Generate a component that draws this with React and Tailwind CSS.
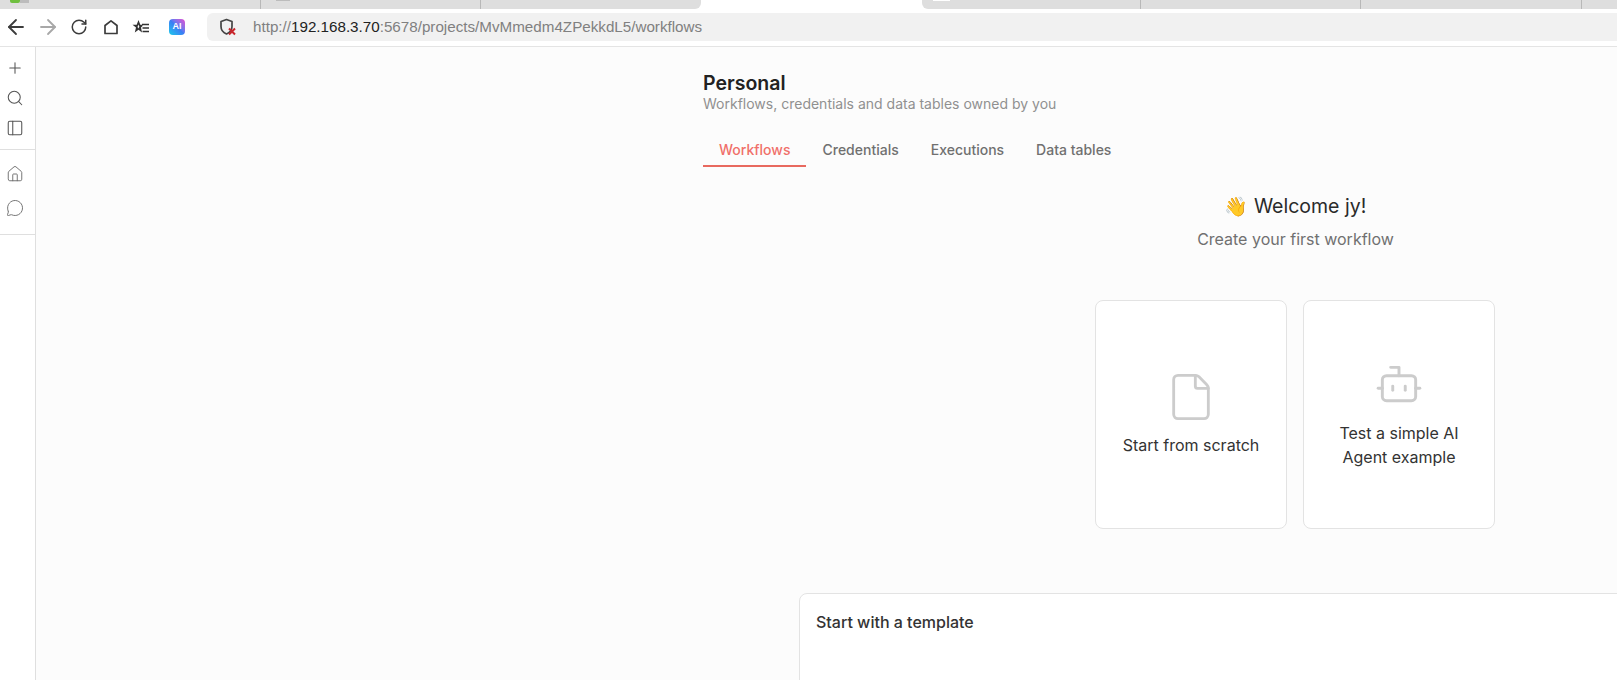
import React from 'react';
import { Plus, Search, PanelLeft, House, MessageCircle, File, Bot, ArrowLeft, ArrowRight, RotateCw } from 'lucide-react';

function TabStrip() {
  return (
    <div className="flex h-[9px] overflow-hidden bg-white">
      <div className="flex w-[261px] items-start border-r border-[#b8b8b8] bg-[#dedede] pl-[10px]">
        <div className="h-[3px] w-[10px] rounded-b-[2px] bg-[#6fbf3f]" />
        <div className="h-[3px] w-[9px] bg-[#bcbcbc]" />
      </div>
      <div className="w-[220px] border-r border-[#b8b8b8] bg-[#dedede] pl-[15px]">
        <div className="h-[1px] w-[14px] bg-[#bcbcbc]" />
      </div>
      <div className="w-[220px] rounded-br-[6px] bg-[#dedede]" />
      <div className="w-[221px] bg-white" />
      <div className="w-[219px] rounded-bl-[6px] border-r border-[#b8b8b8] bg-[#dedede] pl-[11px]">
        <div className="h-[1px] w-[17px] bg-white" />
      </div>
      <div className="w-[220px] border-r border-[#b8b8b8] bg-[#dedede]" />
      <div className="w-[221px] border-r border-[#b8b8b8] bg-[#dedede]" />
      <div className="flex-1 bg-[#dedede]" />
    </div>
  );
}

function Toolbar() {
  return (
    <div className="flex h-[38px] items-start border-b border-[#e4e4e4] bg-white">
      <div className="flex h-[36px] w-[207px] items-center text-[#3c3c3c]">
        <div className="flex w-[32px] justify-center">
          <ArrowLeft size={24} strokeWidth={1.8} />
        </div>
        <div className="flex w-[32px] justify-center text-[#a8a8a8]">
          <ArrowRight size={24} strokeWidth={1.8} />
        </div>
        <div className="flex w-[30px] justify-center">
          <RotateCw size={18} strokeWidth={2} />
        </div>
        <div className="flex w-[34px] justify-center">
          <svg width="16" height="16" viewBox="0 0 16 16" fill="none" stroke="currentColor" strokeWidth="1.7">
            <path d="M2 14.500V6.500L8 1.800l6 4.700v8z" strokeLinejoin="round" />
          </svg>
        </div>
        <div className="flex w-[24px] justify-center">
          <svg width="17" height="16" viewBox="0 0 17 16">
            <path d="M6.500 1l1.800 4.700h2.200v1.400L9 8.400l1 5.100-3.500-2.700L2.800 13.500l1.200-5.100L.5 5.700h4.200z" fill="#333333" />
            <path d="M6.500 5.500l.8 2-.8 2-1-1.500z" fill="#ffffff" />
            <path d="M10 5.500h7M10.500 9h6.500M10.500 12.500h6.500" stroke="#333333" strokeWidth="1.500" />
          </svg>
        </div>
        <div className="flex w-[50px] justify-center">
          <div className="flex h-4 w-4 items-center justify-center rounded-[4px] bg-gradient-to-tr from-[#18c8e8] via-[#3a7df5] to-[#e040d0] font-['Liberation_Sans',sans-serif] text-[9px] font-bold text-white">
            AI
          </div>
        </div>
      </div>
      <div className="mt-[4px] flex h-[28px] flex-1 items-center rounded-l-[6px] bg-[#f1f1f1] font-['Liberation_Sans',sans-serif] text-[15.2px]">
        <svg width="18" height="18" viewBox="0 0 18 18" fill="none" className="ml-[12px] mr-[16px]">
          <path d="M7.500 1.500l5.500 2v5c0 3.500-2 6-5.500 7.500C4 14.500 2 12 2 8.500v-5z" stroke="#444444" strokeWidth="1.700" strokeLinejoin="round" />
          <path d="M10 10.500l6 6M16 10.500l-6 6" stroke="#c8252b" strokeWidth="2" />
        </svg>
        <span className="text-[#808080]">http://</span>
        <span className="text-[#222222]">192.168.3.70</span>
        <span className="text-[#808080]">:5678/projects/MvMmedm4ZPekkdL5/workflows</span>
      </div>
    </div>
  );
}

function Sidebar() {
  return (
    <aside className="w-[36px] shrink-0 border-r border-[#dfdfdf] bg-white text-[#555555]">
      <div className="flex h-[103px] flex-col gap-[12px] border-b border-[#dfdfdf] pl-[6px] pt-[12px]">
        <Plus size={18} strokeWidth={1.4} />
        <Search size={18} strokeWidth={1.4} />
        <PanelLeft size={18} strokeWidth={1.4} />
      </div>
      <div className="flex h-[85px] flex-col gap-[16px] border-b border-[#dfdfdf] pl-[6px] pt-[15px] text-[#666666]">
        <House size={18} strokeWidth={1.2} />
        <MessageCircle size={18} strokeWidth={1.2} />
      </div>
    </aside>
  );
}

function StartCard({ icon, children }) {
  return (
    <div className="flex h-[229px] w-[192px] flex-col items-center justify-center rounded-lg border border-[#e3e3e3] bg-white pb-[2px] text-center text-[16px] leading-[24px] text-[#333333]">
      {icon}
      {children}
    </div>
  );
}

export default function App() {
  return (
    <div className="h-[680px] w-[1617px] overflow-hidden bg-[#fcfcfc] font-['Inter',sans-serif]">
      <TabStrip />
      <Toolbar />
      <div className="flex h-[633px]">
        <Sidebar />
        <main className="flex-1 overflow-hidden pl-[667px] pt-[24px]">
          <h1 className="text-[19.5px] font-semibold leading-[24px] text-[#222222]">Personal</h1>
          <p className="text-[14px] leading-[18px] text-[#909090]">Workflows, credentials and data tables owned by you</p>
          <nav className="mt-[27px] flex text-[14px] font-medium text-[#707070]">
            <div className="border-b-2 border-[#e8695f] px-4 pb-[5px] leading-[20px] text-[#f0706a]">Workflows</div>
            <div className="px-4 leading-[20px]">Credentials</div>
            <div className="px-4 leading-[20px]">Executions</div>
            <div className="px-4 leading-[20px]">Data tables</div>
          </nav>
          <div className="ml-[289px] w-[607px] text-center">
            <div className="mt-[25px] text-[19.5px] leading-[28px] text-[#2a2a2a]">
              <span className="font-['Noto_Color_Emoji','Noto_Sans',sans-serif] text-[19px]">👋</span> Welcome jy!
            </div>
            <div className="mt-[8px] text-[16px] leading-[20px] text-[#707070]">Create your first workflow</div>
          </div>
          <div className="ml-[392px] mt-[51px] flex gap-4">
            <StartCard icon={<File size={52} strokeWidth={1.3} className="mb-[10px] text-[#cccccc]" />}>
              Start from scratch
            </StartCard>
            <StartCard icon={<Bot size={50} strokeWidth={1.4} className="mb-[12px] text-[#cccccc]" />}>
              <span>Test a simple AI<br />Agent example</span>
            </StartCard>
          </div>
          <div className="ml-[96px] mt-[64px] h-[120px] w-[900px] rounded-t-lg border border-[#e3e3e3] bg-white px-4 pt-[18px] text-[16px] font-medium leading-[20px] text-[#333333]">
            Start with a template
          </div>
        </main>
      </div>
    </div>
  );
}
